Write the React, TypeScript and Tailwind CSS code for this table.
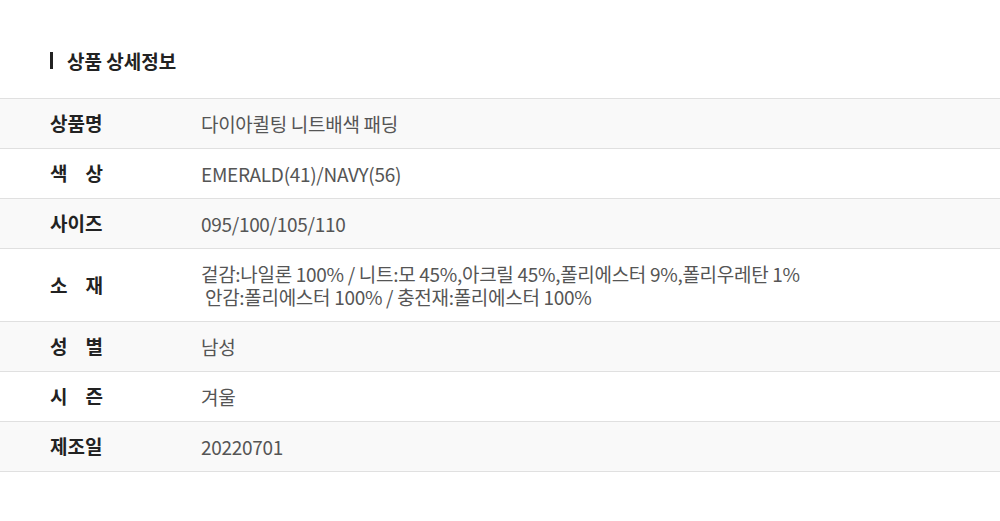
import React from 'react'

const FONT = { fontFamily: '"Noto Sans CJK KR", "Noto Sans", sans-serif' }

interface Row {
  label: string[]
  value: React.ReactNode
  tall?: boolean
}

const rows: Row[] = [
  { label: ['상품명'], value: '다이아퀼팅 니트배색 패딩' },
  { label: ['색', '상'], value: 'EMERALD(41)/NAVY(56)' },
  { label: ['사이즈'], value: '095/100/105/110' },
  {
    label: ['소', '재'],
    value: (
      <>
        <div>겉감:나일론 100% / 니트:모 45%,아크릴 45%,폴리에스터 9%,폴리우레탄 1%</div>
        <div>&nbsp;안감:폴리에스터 100% / 충전재:폴리에스터 100%</div>
      </>
    ),
    tall: true,
  },
  { label: ['성', '별'], value: '남성' },
  { label: ['시', '즌'], value: '겨울' },
  { label: ['제조일'], value: '20220701' },
]

export default function App() {
  return (
    <div className="w-[1000px] h-[521px] bg-white pt-[49px]" style={FONT}>
      {/* Title */}
      <div className="flex items-center px-[50px] h-[22px]">
        <span className="w-[3px] h-[17px] bg-[#222] mr-[14px]" />
        <h2 className="text-[19px] font-bold text-[#222] leading-none">상품 상세정보</h2>
      </div>

      {/* Spec table */}
      <div className="mt-[27px] border-t border-[#e0e0e0]">
        {rows.map((r, i) => (
          <div
            key={i}
            className={
              'flex items-center border-b border-[#e0e0e0] ' +
              (i % 2 === 0 ? 'bg-[#f9f9f9] ' : 'bg-white ') +
              (r.tall ? 'h-[73px]' : 'h-[50px]')
            }
          >
            <div className="w-[201px] pl-[50px] shrink-0">
              {r.label.length > 1 ? (
                <div className="flex justify-between w-[53px] text-[19px] font-bold text-[#222]">
                  {r.label.map(c => <span key={c}>{c}</span>)}
                </div>
              ) : (
                <div className="text-[19px] font-bold text-[#222]">{r.label[0]}</div>
              )}
            </div>
            <div className="text-[19px] text-[#555] tracking-[-0.3px] leading-[23px]">{r.value}</div>
          </div>
        ))}
      </div>
    </div>
  )
}
